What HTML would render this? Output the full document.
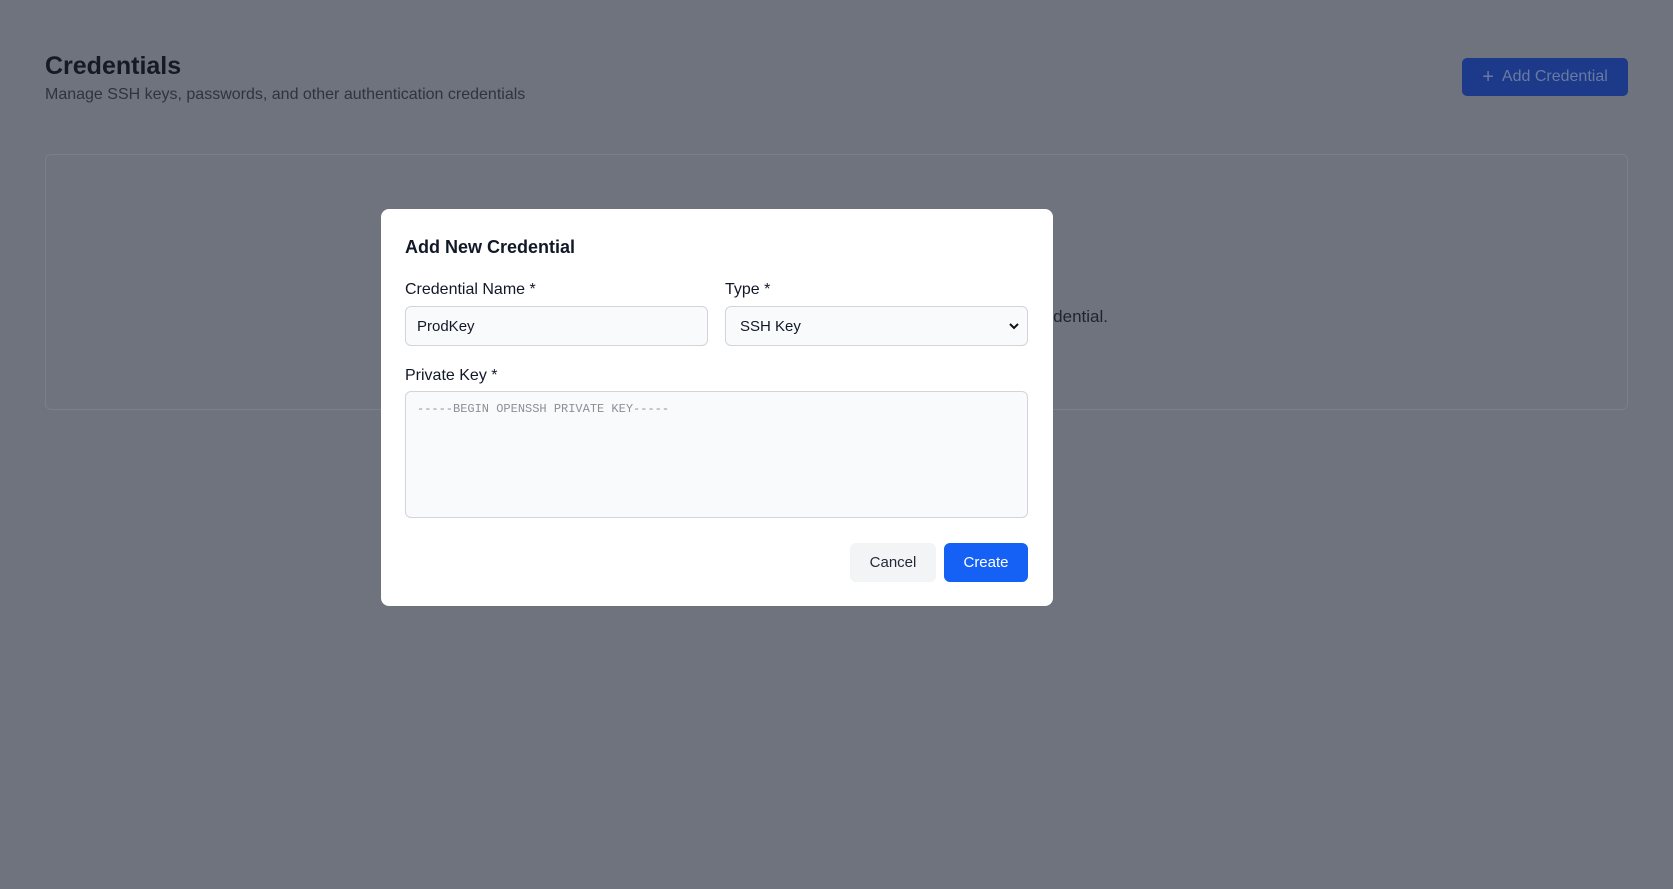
<!DOCTYPE html>
<html><head><meta charset="utf-8"><style>
*{box-sizing:border-box;margin:0;padding:0}
body{width:1673px;height:889px;background:#6e737d;font-family:"Liberation Sans",sans-serif;position:relative;overflow:hidden}
.abs{position:absolute}
h1{position:absolute;left:45px;top:52px;font-size:25px;font-weight:700;color:#141a26}
.sub{left:45px;top:86px;font-size:16px;color:#2e3440}
.btn{left:1462px;top:58px;width:166px;height:38px;background:#1c398a;border-radius:5px;color:#6a7aa3;font-size:16px;display:flex;align-items:center;justify-content:center;gap:8px}
.card{left:45px;top:154px;width:1583px;height:256px;border:1px solid #7a7f89;border-radius:6px}
.empty{right:565px;top:307px;font-size:17px;color:#1e2430}
.modal{left:381px;top:209px;width:672px;height:397px;background:#fff;border-radius:8px}
.modal .t{position:absolute;left:24px;top:28px;font-size:18px;font-weight:700;color:#111827}
.lbl{position:absolute;font-size:16px;color:#111827}
.inp{position:absolute;background:#f9fafb;border:1px solid #d1d5db;border-radius:6px;font-size:15px;color:#111827;padding-left:11px;display:flex;align-items:center}
.ta{position:absolute;left:24px;top:182px;width:623px;height:127px;background:#f9fafb;border:1px solid #d1d5db;border-radius:6px;font-family:"Liberation Mono",monospace;font-size:12px;color:#8a8f98;padding:10px 11px}
.b{position:absolute;top:334px;height:39px;border-radius:6px;font-size:15px;display:flex;align-items:center;justify-content:center}
</style></head><body>
<h1>Credentials</h1>
<div class="abs sub">Manage SSH keys, passwords, and other authentication credentials</div>
<div class="abs btn"><span style="font-size:20px;line-height:1">+</span><span>Add Credential</span></div>
<div class="abs card"></div>
<div class="abs empty">No credentials found. Add your first credential.</div>
<div class="abs modal">
 <div class="t">Add New Credential</div>
 <div class="lbl" style="left:24px;top:72px">Credential Name *</div>
 <div class="lbl" style="left:344px;top:72px">Type *</div>
 <div class="inp" style="left:24px;top:97px;width:303px;height:40px">ProdKey</div>
 <div class="inp" style="left:344px;top:97px;width:303px;height:40px;padding-left:14px">SSH Key
  <svg style="position:absolute;right:8px;top:15px" width="10" height="8" viewBox="0 0 10 8"><path d="M1 2l4 4 4-4" stroke="#111" stroke-width="2" fill="none"/></svg></div>
 <div class="lbl" style="left:24px;top:158px">Private Key *</div>
 <div class="ta">-----BEGIN OPENSSH PRIVATE KEY-----</div>
 <div class="b" style="left:469px;width:86px;background:#f3f4f6;color:#1f2937">Cancel</div>
 <div class="b" style="left:563px;width:84px;background:#1661f5;color:#fff">Create</div>
</div>
</body></html>
